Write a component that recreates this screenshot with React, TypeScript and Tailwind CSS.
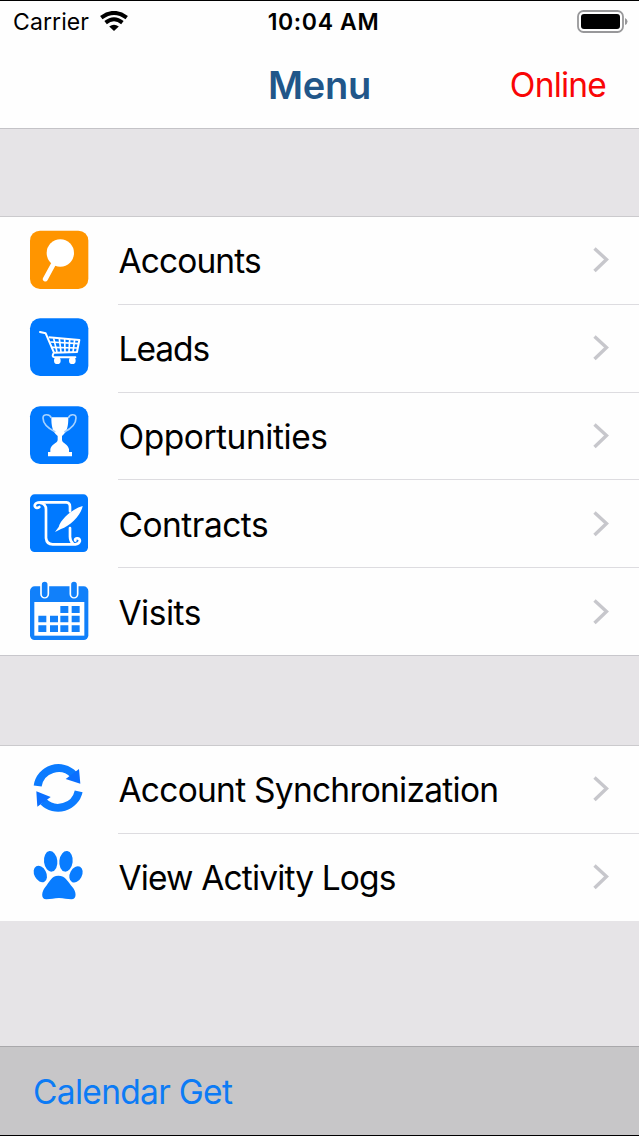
import React from 'react';

type Item = {
    label: string
    icon: React.ReactNode
    tracking: string
}

const AccountsIcon = () => (
    <svg className="size-20" viewBox="0 2 240 240">
        <rect x="30" y="31" width="175" height="175" rx="30" fill="#ff9500" />
        <circle cx="121" cy="98" r="41" fill="#fff" />
        <path d="M101 130 L76 176" stroke="#fff" strokeWidth="15" strokeLinecap="round" />
    </svg>
)

const LeadsIcon = () => (
    <svg className="size-20" viewBox="0 0 240 240" fill="none" stroke="#fff">
        <rect x="30" y="31" width="175" height="173" rx="30" fill="#0079ff" stroke="none" />
        <path d="M60 72 L77 76 L102 134 Q93 146 104 148 L166 148" strokeWidth="6" strokeLinecap="round" strokeLinejoin="round" />
        <path d="M86 88 L178 96 L171 132 L103 134" strokeWidth="6" strokeLinejoin="round" />
        <path d="M91 102 L176 107 M96 118 L173 120" strokeWidth="5" />
        <path d="M101 91 L111 132 M118 92 L123 132 M134 93 L135 132 M149 94 L147 132 M164 95 L159 132" strokeWidth="5" />
        <circle cx="112" cy="158" r="10" fill="#fff" stroke="none" />
        <circle cx="157" cy="158" r="10" fill="#fff" stroke="none" />
    </svg>
)

const OpportunitiesIcon = () => (
    <svg className="size-20" viewBox="0 0 240 240">
        <rect x="30" y="31" width="175" height="173" rx="30" fill="#0079ff" />
        <path d="M94 64 H145 C145 90 142 107 126 120 V132 C127 142 145 145 147 160 V168 H156 V181 H84 V168 H91 V160 C93 145 112 142 113 132 V120 C97 107 94 90 94 64 Z" fill="#fff" />
        <path d="M94 66 C90 54 69 52 69 66 C69 84 86 98 106 108 M145 66 C149 54 168 52 168 66 C168 84 153 98 133 108" fill="none" stroke="#a6d2ff" strokeWidth="5" />
    </svg>
)

const ContractsIcon = () => (
    <svg className="size-20" viewBox="0 0 240 240" fill="none" stroke="#fff">
        <rect x="30" y="31" width="174" height="173" rx="14" fill="#0079ff" stroke="none" />
        <path d="M58 69 C47 78 38 63 50 57 C53 55 57 55 62 55 H139 Q150 56 150 68 V82" strokeWidth="8" strokeLinecap="round" />
        <path d="M62 57 Q78 60 78 76 V162 Q80 181 98 181 H166 C181 180 184 165 173 163 C167 162 164 166 166 170 M150 132 V158 Q150 172 160 180" strokeWidth="8" strokeLinecap="round" />
        <path d="M105 144 L116 129 C122 105 160 73 188 66 C184 92 150 127 123 135 Z" fill="#fff" stroke="none" />
    </svg>
)

const VisitsIcon = () => (
    <svg className="size-20" viewBox="0 0 240 240">
        <rect x="30" y="43" width="175" height="161" rx="14" fill="#1180fa" />
        <rect x="43" y="90" width="150" height="101" fill="#fff" />
        <path d="M74 42 V66 M162 42 V66" stroke="#fff" strokeWidth="27" strokeLinecap="round" />
        <path d="M74 38 V67 M162 38 V67" stroke="#1180fa" strokeWidth="17" strokeLinecap="round" />
        <path d="M121 102 h24 v21 h-24 z M155 102 h24 v21 h-24 z M55 131 h24 v20 h-24 z M90 131 h24 v20 h-24 z M121 131 h24 v20 h-24 z M155 131 h24 v20 h-24 z M55 160 h24 v20 h-24 z M90 160 h24 v20 h-24 z M121 160 h24 v20 h-24 z M155 160 h24 v20 h-24 z" fill="#1180fa" />
    </svg>
)

const SyncIcon = () => (
    <svg className="size-20" viewBox="0 29 240 240">
        <path d="M53 137 A63 63 0 0 1 161 103" fill="none" stroke="#0b7bff" strokeWidth="24" />
        <path d="M177 86 L181 130 L137 116 Z" fill="#0b6fff" />
        <path d="M176 153 A63 63 0 0 1 70 184" fill="none" stroke="#0b7bff" strokeWidth="24" />
        <path d="M49 153 L92 170 L52 199 Z" fill="#0b6fff" />
    </svg>
)

const PawIcon = () => (
    <svg className="size-20" viewBox="0 3 240 240" fill="#087cff">
        <ellipse cx="92" cy="76" rx="20" ry="31" transform="rotate(-7 92 76)" />
        <ellipse cx="138" cy="76" rx="20" ry="31" transform="rotate(7 138 76)" />
        <ellipse cx="61" cy="114" rx="18" ry="26" transform="rotate(-28 61 114)" />
        <ellipse cx="168" cy="115" rx="18" ry="26" transform="rotate(28 168 115)" />
        <path d="M115 119 C137 119 145 139 157 153 C169 167 172 189 154 190 C141 190 132 186 117 186 C102 186 93 190 79 190 C61 189 65 167 76 153 C88 139 94 119 115 119 Z" />
    </svg>
)

const mainItems: Item[] = [
    { label: 'Accounts', icon: <AccountsIcon />, tracking: 'tracking-[-0.9px]' },
    { label: 'Leads', icon: <LeadsIcon />, tracking: 'tracking-[-1px]' },
    { label: 'Opportunities', icon: <OpportunitiesIcon />, tracking: 'tracking-[-0.45px]' },
    { label: 'Contracts', icon: <ContractsIcon />, tracking: 'tracking-[-0.5px]' },
    { label: 'Visits', icon: <VisitsIcon />, tracking: 'tracking-[-0.5px]' },
]

const toolItems: Item[] = [
    { label: 'Account Synchronization', icon: <SyncIcon />, tracking: 'tracking-[-0.74px]' },
    { label: 'View Activity Logs', icon: <PawIcon />, tracking: 'tracking-[-0.85px]' },
]

function MenuList({ items }: { items: Item[] }) {
    return (
        <ul className="bg-[#fefefe] border-t border-[#cbcacd]">
            {items.map((item, i) => (
                <li key={item.label} className="h-[87.8px] last:h-[87px] flex pl-5">
                    <div className="w-20 shrink-0 pt-[3.6px]">{item.icon}</div>
                    <div className={`ml-[18px] flex-1 flex items-center justify-between pr-[29px] ${i < items.length - 1 ? 'border-b border-[#dddce0]' : ''}`}>
                        <span className={`text-[33.5px] leading-10 pt-0.5 pl-[0.5px] whitespace-nowrap ${item.tracking}`}>{item.label}</span>
                        <svg className="w-[18px] h-7" viewBox="0 0 18 28" fill="none" stroke="#c7c7cc" strokeWidth="3.4">
                            <path d="M2.5 2.5 L14.5 13.5 L2.5 25" />
                        </svg>
                    </div>
                </li>
            ))}
        </ul>
    )
}

export default function App() {
    return (
        <div className="h-[1136px] w-[639px] flex flex-col overflow-hidden bg-[#e6e4e7] border-y border-black text-black font-[Inter,sans-serif]">
            <header className="h-32 shrink-0 bg-[#fefefe] border-b border-[#c4c3c7]">
                <div className="h-10 grid grid-cols-3 items-center pl-[13px] pr-[11px]">
                    <div className="flex items-center gap-[11px] pt-0.5">
                        <span className="text-[23px] tracking-[0.1px]">Carrier</span>
                        <svg className="w-7 h-5 -mt-0.5" viewBox="0 0 28 20" fill="none" stroke="#000" strokeWidth="4">
                            <path d="M1.3 6.6 Q14 -2.8 26.7 6.6" />
                            <path d="M5.6 11.6 Q14 5 22.4 11.6" />
                            <path d="M14 20 L9.2 15.6 Q14 12 18.8 15.6 Z" fill="#000" stroke="none" />
                        </svg>
                    </div>
                    <span className="text-[23px] tracking-[0.65px] font-semibold text-center whitespace-nowrap pt-0.5 pl-1.5">10:04 AM</span>
                    <svg className="w-[52px] h-[23px] justify-self-end" viewBox="0 0 52 23">
                        <rect x="2" y="1" width="45" height="21" rx="5.5" fill="none" stroke="#98989a" strokeWidth="1.8" />
                        <rect x="5" y="4" width="39" height="15" rx="3" fill="#000" />
                        <path d="M49 8 Q51.5 9 51.5 11.5 Q51.5 14 49 15 Z" fill="#98989a" />
                    </svg>
                </div>
                <div className="h-[87px] grid grid-cols-3 items-center px-[33px] pt-0.5">
                    <h1 className="col-start-2 text-center text-[38px] tracking-[-0.3px] font-semibold text-[#215689]">Menu</h1>
                    <button className="justify-self-end text-[33.5px] tracking-[-0.8px] text-[#f90606]">Online</button>
                </div>
            </header>
            <main className="flex-1 pt-[87px]">
                <MenuList items={mainItems} />
                <div className="h-[89.8px] border-t border-[#c8c7cc]"></div>
                <MenuList items={toolItems} />
            </main>
            <footer className="h-[89px] shrink-0 bg-[#c7c6c8] border-t border-[#a9a8ab] flex items-center pl-[33px] pt-0.5">
                <button className="text-[33.5px] tracking-[-0.7px] text-[#0c7bf5]">Calendar Get</button>
            </footer>
        </div>
    );
}
